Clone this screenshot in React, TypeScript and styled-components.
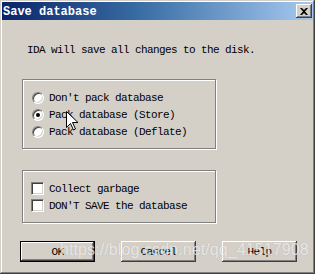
import styled, { createGlobalStyle } from 'styled-components'

const Global = createGlobalStyle`
  html, body { margin: 0; padding: 0; background: #d4d0c8; }
  * { box-sizing: border-box; }
`

const FACE = '#d4d0c8'
const MONO = `'Liberation Mono', 'DejaVu Sans Mono', monospace`

// ─── Window frame ────────────────────────────────────────────────────────────

const Window = styled.div`
  position: relative;
  width: 315px;
  height: 274px;
  background: ${FACE};
  padding: 2px 2px 0 2px;
  box-shadow:
    inset -1px -1px #404040,
    inset 1px 1px ${FACE},
    inset -2px -2px #808080,
    inset 2px 2px #fff;
  font-family: ${MONO};
  font-size: 11px;
  letter-spacing: -0.6px;
  color: #000;
  overflow: hidden;
`

const TitleBar = styled.div`
  height: 18px;
  display: flex;
  align-items: center;
  justify-content: space-between;
  padding: 0 1px 0 1px;
  background: linear-gradient(90deg, #0a246a 0%, #3a6ea5 45%, #a6caf0 100%);
`

const Title = styled.span`
  color: #fff;
  font-family: ${MONO};
  font-weight: bold;
  font-size: 12px;
  letter-spacing: 0;
  padding-top: 1px;
`

const CloseBtn = styled.div`
  width: 16px;
  height: 14px;
  background: ${FACE};
  box-shadow:
    inset -1px -1px #404040,
    inset 1px 1px #fff,
    inset -2px -2px #808080;
  display: flex;
  align-items: center;
  justify-content: center;
`

// ─── Body ────────────────────────────────────────────────────────────────────

const Body = styled.div`
  display: flex;
  flex-direction: column;
  padding: 24px 0 0 20px;
`

const Message = styled.div`
  height: 13px;
  line-height: 13px;
  padding-left: 5px;
  margin-bottom: 22px;
`

const Group = styled.div<{ gapBelow: number }>`
  width: 194px;
  border: 1px solid #808080;
  box-shadow: inset 1px 1px #fff, 1px 1px #fff;
  padding: 9px 0 8px 8px;
  margin-bottom: ${p => p.gapBelow}px;
  display: flex;
  flex-direction: column;
`

const Row = styled.div`
  height: 17px;
  display: flex;
  align-items: center;
  gap: 5px;
  white-space: pre;
`

const Radio = styled.span<{ checked?: boolean }>`
  position: relative;
  width: 12px;
  height: 12px;
  margin-left: 1px;
  border-radius: 50%;
  background: #fff;
  border: 1px solid;
  border-color: #808080 #fff #fff #808080;
  box-shadow: inset 1px 1px #404040, inset -1px -1px ${FACE};
  flex: none;

  ${p => p.checked && `
    &::after {
      content: '';
      position: absolute;
      left: 3px;
      top: 3px;
      width: 4px;
      height: 4px;
      border-radius: 50%;
      background: #000;
    }
  `}
`

const Check = styled.span`
  width: 13px;
  height: 13px;
  background: #fff;
  border: 1px solid;
  border-color: #808080 #fff #fff #808080;
  box-shadow: inset 1px 1px #404040, inset -1px -1px ${FACE};
  flex: none;
`

const Buttons = styled.div`
  display: flex;
  gap: 26px;
  margin-left: -2px;
`

const Button = styled.div<{ isDefault?: boolean }>`
  width: 75px;
  height: 21px;
  display: flex;
  align-items: center;
  justify-content: center;
  background: ${FACE};
  border: ${p => (p.isDefault ? '1px solid #000' : 'none')};
  box-shadow:
    inset -1px -1px #404040,
    inset 1px 1px #fff,
    inset -2px -2px #808080;
`

// ─── Overlays (watermark + cursor) ───────────────────────────────────────────

const Watermark = styled.div`
  position: absolute;
  left: 60px;
  top: 241px;
  font-family: 'Liberation Sans', Arial, sans-serif;
  font-size: 16px;
  letter-spacing: 0.1px;
  color: rgba(255, 255, 255, 0.7);
  text-shadow: 0 0 1px rgba(120, 120, 120, 0.4);
  white-space: nowrap;
`

const Cursor = styled.svg`
  position: absolute;
  left: 66px;
  top: 111px;
`

export default function App() {
  return (
    <>
      <Global />
      <Window>
        <TitleBar>
          <Title>Save database</Title>
          <CloseBtn>
            <svg width="8" height="7" viewBox="0 0 8 7">
              <path d="M0 0h2l2 2 2-2h2L5 3.5 8 7H6L4 5 2 7H0l3-3.5z" fill="#000" />
            </svg>
          </CloseBtn>
        </TitleBar>

        <Body>
          <Message>IDA will save all changes to the disk.</Message>

          <Group gapBelow={21}>
            <Row><Radio />Don't pack database</Row>
            <Row><Radio checked />Pack database (Store)</Row>
            <Row><Radio />Pack database (Deflate)</Row>
          </Group>

          <Group gapBelow={18}>
            <Row><Check />Collect garbage</Row>
            <Row><Check />DON'T SAVE the database</Row>
          </Group>

          <Buttons>
            <Button isDefault>OK</Button>
            <Button>Cancel</Button>
            <Button>Help</Button>
          </Buttons>
        </Body>

        <Watermark>https://blog.csdn.net/qq_41517908</Watermark>

        <Cursor width="12" height="20" viewBox="0 0 12 20">
          <path d="M0.5 0.5v16l4-4 3 6.5 2-1-3-6.5h5.5z" fill="#fff" stroke="#000" strokeWidth="1" />
        </Cursor>
      </Window>
    </>
  )
}
